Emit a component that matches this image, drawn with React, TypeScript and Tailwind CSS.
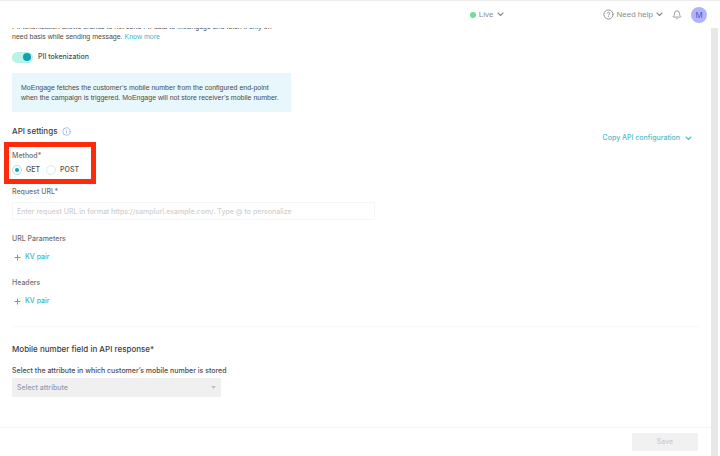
import type { ReactNode } from "react";
import { Bell, CircleHelp, Info } from "lucide-react";

function Chevron() {
  return (
    <svg viewBox="0 0 7 5" className="h-[5px] w-[7px]" fill="none" stroke="currentColor" strokeWidth="1.1">
      <path d="M1 1l2.5 2.5L6 1" strokeLinecap="round" strokeLinejoin="round" />
    </svg>
  );
}

function Label({ htmlFor, children }: { htmlFor?: string; children: ReactNode }) {
  return (
    <label htmlFor={htmlFor} className="block text-[7px] leading-[10px] font-medium text-[#707070]">
      {children}
    </label>
  );
}

function Method({ name, defaultChecked }: { name: string; defaultChecked?: boolean }) {
  return (
    <label className="flex items-center gap-1 text-[7px] leading-[10px] font-medium text-[#505050]">
      <input
        type="radio"
        name="method"
        defaultChecked={defaultChecked}
        className="size-[10px] appearance-none rounded-full border border-[#dfe7ea] bg-white bg-clip-content p-[2px] checked:border-[#b4e0e5] checked:bg-[#12a0b0]"
      />
      {name}
    </label>
  );
}

function KeyValues({ title }: { title: string }) {
  return (
    <section>
      <h3 className="text-[7px] leading-[10px] font-medium text-[#707070]">{title}</h3>
      <button type="button" className="mt-2 flex items-center gap-1 pl-[2px] text-[7px] leading-[10px] font-medium text-[#3db5c4]">
        <svg viewBox="0 0 7 7" className="size-[7px]" stroke="currentColor" strokeWidth="1">
          <path d="M3.5 .5v6M.5 3.5h6" />
        </svg>
        KV pair
      </button>
    </section>
  );
}

export default function App() {
  return (
    <div className="flex min-h-screen flex-col bg-white font-['Inter',sans-serif] text-[#4c4c4c]">
      <header className="flex h-7 items-center border-t border-[#ececec] pr-[13px] text-[8px] leading-3 text-[#8c8c8c]">
        <div className="flex flex-1 justify-end">
          <button type="button" className="flex items-center gap-[3px] font-['Liberation_Sans',sans-serif]">
            <span className="size-[6px] rounded-full bg-[#6fdd98]" />
            Live
            <Chevron />
          </button>
        </div>
        <div className="ml-[99px] flex items-center">
          <button type="button" className="flex items-center gap-[3px] font-['Liberation_Sans',sans-serif]">
            <CircleHelp size={11} strokeWidth={2} />
            Need help
            <Chevron />
          </button>
          <button type="button" aria-label="Notifications" className="ml-[9px]">
            <Bell size={10} strokeWidth={2} />
          </button>
          <button type="button" className="ml-[9px] size-4 rounded-full bg-[#b0b3fb] text-[8px] text-[#5557c9]">
            M
          </button>
        </div>
      </header>

      <div className="flex flex-1 pr-[2px]">
        <div className="flex min-w-0 flex-1 flex-col">
          <main className="flex-1 overflow-hidden px-3 pb-[30px]">
            <p className="-mt-[6px] font-['Liberation_Sans',sans-serif] text-[7px] leading-[10px]">
              PII tokenization allows brands to not send PII data to MoEngage and fetch it only on
              <br />
              need basis while sending message.{" "}
              <a href="#pii" className="text-[#3fb6c8]">
                Know more
              </a>
            </p>
            <label className="mt-[9px] flex h-3 items-center gap-[5px] text-[7px] font-medium">
              <input
                type="checkbox"
                role="switch"
                defaultChecked
                className="flex h-[11px] w-[21px] appearance-none items-center rounded-full bg-[#b9f2e6] p-[2px] before:size-2 before:rounded-full before:bg-[#12a0b4] before:content-[''] checked:justify-end"
              />
              PII tokenization
            </label>
            <p className="mt-[10px] w-[279px] rounded-[1px] bg-[#e8f7fb] pt-[10px] pb-[9px] pl-[9px] font-['Liberation_Sans',sans-serif] text-[7px] leading-[10px]">
              MoEngage fetches the customer’s mobile number from the configured end-point
              <br />
              when the campaign is triggered. MoEngage will not store receiver’s mobile number.
            </p>

            <section className="mt-[13px] flex items-start justify-between">
              <div className="w-[363px]">
                <h2 className="flex items-center gap-[5px] text-[8px] leading-3 font-medium text-[#3c3c3c]">
                  API settings
                  <Info size={9} strokeWidth={2} className="text-[#98a6ea]" />
                </h2>
                <fieldset className="relative mt-[14px] w-max">
                  <legend className="text-[7px] leading-[10px] font-medium text-[#707070]">Method*</legend>
                  <div className="mt-1 flex gap-[6px]">
                    <Method name="GET" defaultChecked />
                    <Method name="POST" />
                  </div>
                  <span className="pointer-events-none absolute -top-[19px] -right-[17px] -bottom-[9px] -left-2 border-[5px] border-[#fd2b0b]" />
                </fieldset>
                <div className="mt-3">
                  <Label htmlFor="url">Request URL*</Label>
                  <input
                    id="url"
                    type="text"
                    placeholder="Enter request URL in format https://samplurl.example.com/. Type @ to personalize"
                    className="mt-[5px] block h-[18px] w-full border border-[#f4f6f7] px-1 text-[7px] font-medium placeholder:text-[#cfcfcf]"
                  />
                </div>
              </div>
              <button type="button" className="mt-2 mr-[7px] flex items-center gap-[5px] text-[7px] leading-[10px] font-medium text-[#4dbccc]">
                Copy API configuration
                <Chevron />
              </button>
            </section>

            <div className="mt-[14px] flex flex-col gap-4">
              <KeyValues title="URL Parameters" />
              <KeyValues title="Headers" />
            </div>

            <section className="mt-5 border-t border-[#f8f8f8] pt-4">
              <h2 className="mb-[11px] text-[8px] leading-3 font-medium text-[#3c3c3c]">Mobile number field in API response*</h2>
              <label htmlFor="attribute" className="block text-[7px] leading-[10px] font-medium">
                Select the attribute in which customer’s mobile number is stored
              </label>
              <div className="mt-[2px] grid w-[209px] items-center">
                <select
                  id="attribute"
                  className="col-start-1 row-start-1 h-[19px] appearance-none bg-[#f0f0f0] px-[5px] pt-px text-[7px] font-medium text-[#929ab2]"
                >
                  <option>Select attribute</option>
                </select>
                <svg
                  viewBox="0 0 5 3"
                  className="pointer-events-none col-start-1 row-start-1 mr-[5px] h-[3px] w-[5px] justify-self-end"
                  fill="#c2c2c2"
                >
                  <path d="M0 0h5L2.5 3z" />
                </svg>
              </div>
            </section>
          </main>
          <footer className="flex h-[29px] items-center justify-end border-t border-[#f4f4f4] pr-[13px]">
            <button type="button" disabled className="h-[18px] w-[66px] rounded-[1px] bg-[#f1f1f1] text-[7px] font-medium text-[#cccccc]">
              Save
            </button>
          </footer>
        </div>
        <div className="w-[7px] bg-[#e8e8e8]" />
      </div>
    </div>
  );
}
